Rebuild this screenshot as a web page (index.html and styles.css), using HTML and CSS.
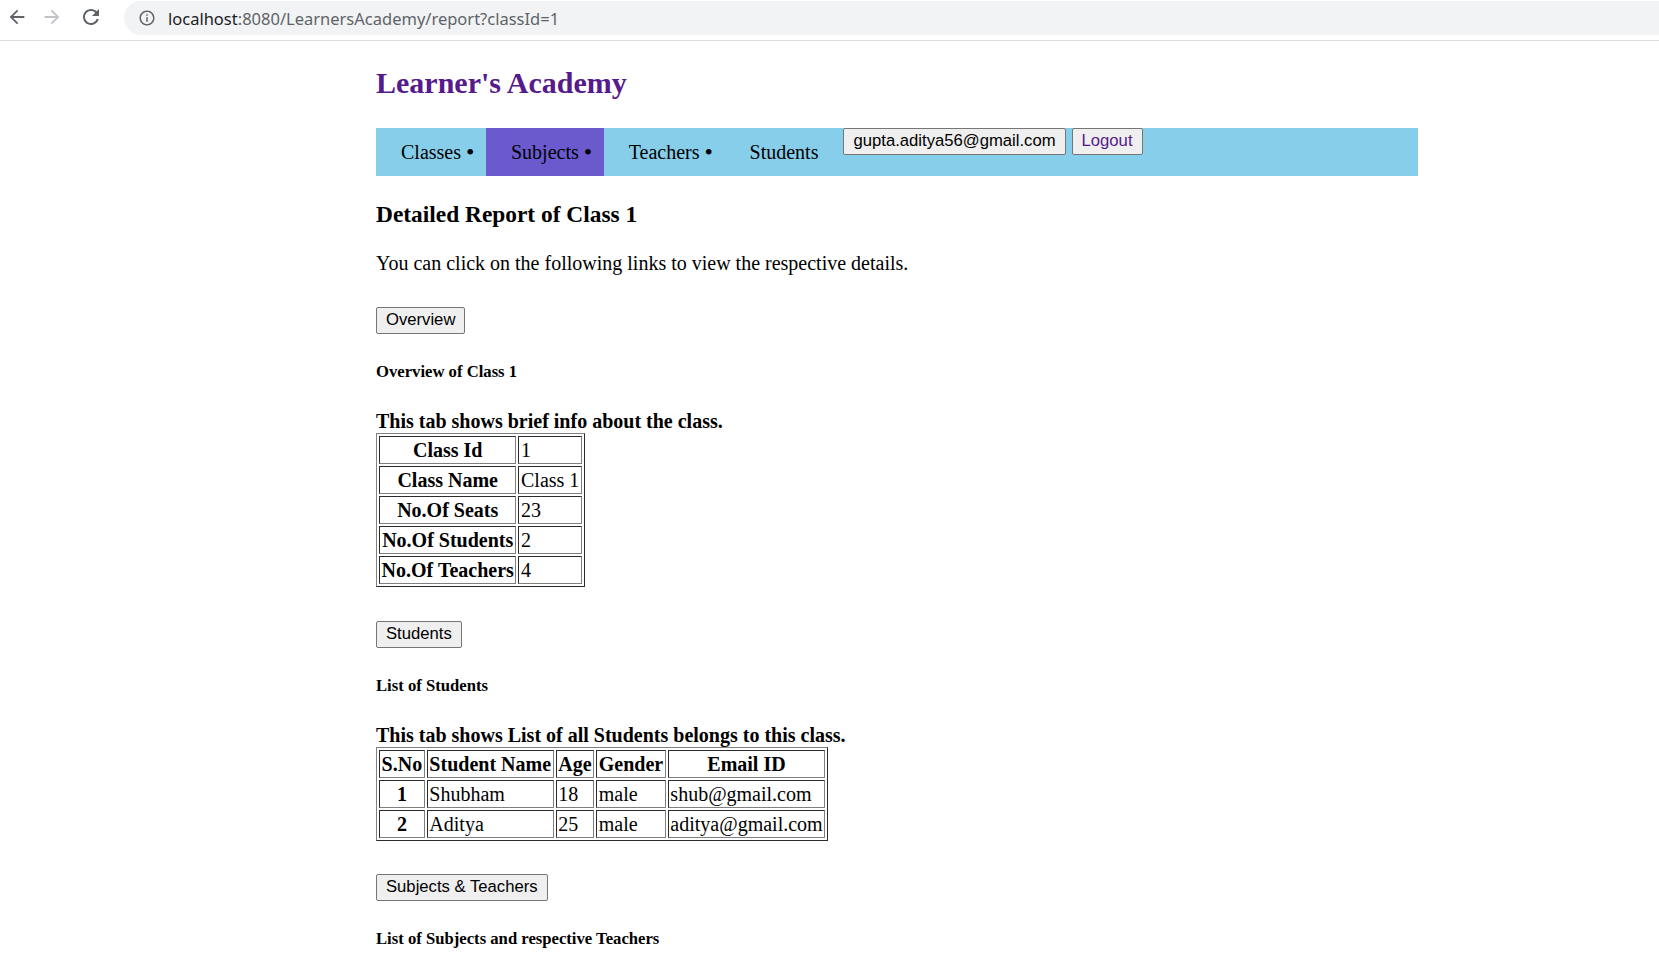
FILE: index.html
```html
<!DOCTYPE html>
<html lang="en">
<head>
<meta charset="utf-8">
<title>Learner's Academy - Report</title>
<link rel="stylesheet" href="styles.css">
</head>
<body>
<div class="chrome">
  <svg class="ic ic-back" viewBox="0 0 24 24"><path d="M20 11H7.83l5.59-5.59L12 4l-8 8 8 8 1.41-1.41L7.83 13H20v-2z"/></svg>
  <svg class="ic ic-fwd" viewBox="0 0 24 24"><path d="M12 4l-1.41 1.41L16.17 11H4v2h12.17l-5.58 5.59L12 20l8-8z"/></svg>
  <svg class="ic ic-reload" viewBox="0 0 24 24"><path d="M17.65 6.35C16.2 4.9 14.21 4 12 4c-4.42 0-7.99 3.58-7.99 8s3.57 8 7.99 8c3.73 0 6.84-2.55 7.73-6h-2.08c-.82 2.33-3.04 4-5.65 4-3.31 0-6-2.69-6-6s2.69-6 6-6c1.66 0 3.14.69 4.22 1.78L13 11h7V4l-2.35 2.35z"/></svg>
  <div class="omnibox">
    <svg class="ic-info" viewBox="0 0 24 24"><path d="M11 7h2v2h-2zm0 4h2v6h-2zm1-9C6.48 2 2 6.48 2 12s4.48 10 10 10 10-4.48 10-10S17.52 2 12 2zm0 18c-4.41 0-8-3.590-8-8s3.59-8 8-8 8 3.59 8 8-3.59 8-8 8z"/></svg>
    <span class="host">localhost</span><span class="path">:8080/LearnersAcademy/report?classId=1</span>
  </div>
</div>

<main class="page">
  <h2 class="brand"><a href="#">Learner's Academy</a></h2>

  <nav class="menu">
    <span class="menu-item">Classes <span class="dot">•</span></span>
    <span class="menu-item active">Subjects <span class="dot">•</span></span>
    <span class="menu-item">Teachers <span class="dot">•</span></span>
    <span class="menu-item last">Students</span>
    <div class="user">
      <button class="btn">gupta.aditya56@gmail.com</button>
      <button class="btn logout">Logout</button>
    </div>
  </nav>

  <h3 class="title">Detailed Report of Class 1</h3>
  <p class="intro">You can click on the following links to view the respective details.</p>

  <div class="tab-btn first"><button class="btn">Overview</button></div>
  <h5 class="tab-title">Overview of Class 1</h5>
  <h4 class="tab-desc">This tab shows brief info about the class.</h4>
  <table class="grid">
    <tr><th>Class Id</th><td>1</td></tr>
    <tr><th>Class Name</th><td>Class 1</td></tr>
    <tr><th>No.Of Seats</th><td>23</td></tr>
    <tr><th>No.Of Students</th><td>2</td></tr>
    <tr><th>No.Of Teachers</th><td>4</td></tr>
  </table>

  <div class="tab-btn"><button class="btn">Students</button></div>
  <h5 class="tab-title">List of Students</h5>
  <h4 class="tab-desc">This tab shows List of all Students belongs to this class.</h4>
  <table class="grid">
    <tr><th>S.No</th><th>Student Name</th><th>Age</th><th>Gender</th><th class="wide">Email ID</th></tr>
    <tr><th>1</th><td>Shubham</td><td>18</td><td>male</td><td>shub@gmail.com</td></tr>
    <tr><th>2</th><td>Aditya</td><td>25</td><td>male</td><td>aditya@gmail.com</td></tr>
  </table>

  <div class="tab-btn last"><button class="btn">Subjects &amp; Teachers</button></div>
  <h5 class="tab-title">List of Subjects and respective Teachers</h5>
</main>
</body>
</html>
```

FILE: styles.css
```css
html, body {
  margin: 0;
  padding: 0;
  background: #fff;
}

body {
  font-family: "Liberation Serif", "Times New Roman", serif;
  color: #000;
  overflow: hidden;
}

/* browser chrome */
.chrome {
  height: 40px;
  border-bottom: 1px solid #dadce0;
  display: flex;
  align-items: flex-start;
  background: #fff;
}

.ic {
  width: 22px;
  height: 22px;
  margin-top: 6px;
  fill: #5f6368;
  flex: none;
}

.ic-back {
  margin-left: 6px;
}

.ic-fwd {
  margin-left: 13px;
  fill: #bfc2c6;
}

.ic-reload {
  width: 24px;
  height: 24px;
  margin-top: 5px;
  margin-left: 16px;
}

.omnibox {
  flex: 1;
  margin-left: 21px;
  margin-top: 1px;
  height: 34px;
  background: #f1f3f4;
  border-radius: 17px 0 0 17px;
  display: flex;
  align-items: center;
  font-family: "Noto Sans", "Open Sans", sans-serif;
  font-size: 16.5px;
  white-space: nowrap;
}

.ic-info {
  width: 18px;
  height: 18px;
  margin-left: 14px;
  fill: #5f6368;
  flex: none;
}

.host {
  margin-left: 12px;
  color: #202124;
}

.path {
  color: #5f6368;
}

/* page */
.page {
  margin-left: 376px;
  width: 1042px;
}

.brand {
  margin: 25px 0 0;
  font-size: 30px;
  line-height: 34px;
  font-weight: bold;
}

.brand a {
  color: #551a8b;
  text-decoration: none;
}

.menu {
  margin-top: 28px;
  height: 48px;
  background: #87ceeb;
  display: flex;
  align-items: flex-start;
}

.menu-item {
  font-size: 20px;
  line-height: 48px;
  padding: 0 11.6px 0 25px;
  color: #000;
  white-space: nowrap;
}

.menu-item .dot {
  font-size: 24px;
  line-height: 20px;
  vertical-align: -1px;
}

.menu-item.active {
  background: #6a5acd;
}

.menu-item.last {
  padding-right: 25px;
}

.user {
  display: flex;
  gap: 6px;
}

.btn {
  font-family: "Liberation Sans", Arial, sans-serif;
  font-size: 16.67px;
  line-height: 20px;
  padding: 2px 9px 3px;
  border: 1px solid #767676;
  border-radius: 2px;
  background: #efefef;
  color: #000;
  margin: 0;
  white-space: nowrap;
}

.btn.logout {
  color: #551a8b;
}

.title {
  margin: 25px 0 0;
  font-size: 23.4px;
  line-height: 27px;
  font-weight: bold;
}

.intro {
  margin: 24px 0 0;
  font-size: 20px;
  line-height: 23px;
}

.tab-btn {
  display: flex;
  margin-top: 34px;
}

.tab-btn.first {
  margin-top: 32px;
}

.tab-btn.last {
  margin-top: 33px;
}

.tab-title {
  margin: 28px 0 0;
  font-size: 16.67px;
  line-height: 19px;
  font-weight: bold;
}

.tab-desc {
  margin: 29px 0 0;
  font-size: 20px;
  line-height: 23px;
  font-weight: bold;
}

.grid {
  border: 1px outset grey;
  border-spacing: 2px;
  font-size: 20px;
}

.grid th,
.grid td {
  border: 1px inset grey;
  padding: 1px 1.6px;
  line-height: 24px;
}

.grid th {
  font-weight: bold;
  text-align: center;
}

.grid td {
  text-align: left;
}
```
